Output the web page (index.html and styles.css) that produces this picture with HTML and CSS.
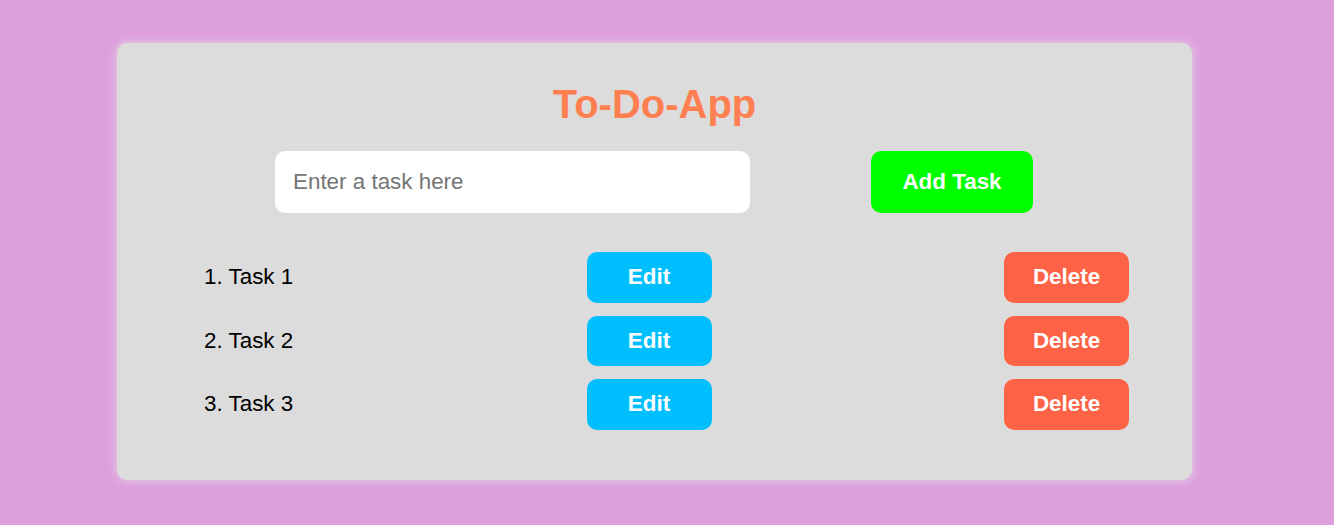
FILE: index.html
```html
<!DOCTYPE html>
<html lang="en">
<head>
<meta charset="utf-8">
<title>To-Do-App</title>
<link rel="stylesheet" href="styles.css">
</head>
<body>
<main class="card">
  <h1 class="title">To-Do-App</h1>
  <div class="entry">
    <input class="task-input" type="text" placeholder="Enter a task here">
    <button class="btn btn-add">Add Task</button>
  </div>
  <ul class="tasks">
    <li class="task"><span class="task-text">1. Task 1</span><button class="btn btn-edit">Edit</button><button class="btn btn-delete">Delete</button></li>
    <li class="task"><span class="task-text">2. Task 2</span><button class="btn btn-edit">Edit</button><button class="btn btn-delete">Delete</button></li>
    <li class="task"><span class="task-text">3. Task 3</span><button class="btn btn-edit">Edit</button><button class="btn btn-delete">Delete</button></li>
  </ul>
</main>
</body>
</html>
```

FILE: styles.css
```css
* { box-sizing: border-box; }

html, body {
  margin: 0;
  padding: 0;
}

body {
  background: #dda0dd;
  font-family: "Liberation Sans", Arial, sans-serif;
  padding: 43px 0 0 117px;
  height: 525px;
  overflow: hidden;
}

.card {
  width: 1075px;
  height: 437px;
  background: #dcdcdc;
  border-radius: 10px;
  box-shadow: 0 0 10px rgba(230, 220, 230, 0.9);
  padding-top: 38px;
}

.title {
  margin: 0;
  text-align: center;
  color: #ff7f50;
  font-size: 40px;
  font-weight: bold;
  line-height: 46px;
}

.entry {
  display: flex;
  gap: 121px;
  margin-top: 24px;
  padding-left: 158px;
}

.task-input {
  width: 475px;
  height: 62px;
  border: none;
  border-radius: 10px;
  background: #fff;
  padding: 0 18px;
  font-family: "Liberation Sans", Arial, sans-serif;
  font-size: 22.4px;
  outline: none;
}

.task-input::placeholder { color: #757575; }

.btn {
  border: none;
  border-radius: 10px;
  color: #fff;
  font-family: "Liberation Sans", Arial, sans-serif;
  font-weight: bold;
  font-size: 22.4px;
  cursor: pointer;
}

.btn-add {
  width: 162px;
  height: 62px;
  background: #00ff00;
}

.tasks {
  list-style: none;
  margin: 39px 0 0 0;
  padding: 0 63px 0 87px;
  display: flex;
  flex-direction: column;
  gap: 13px;
}

.task {
  display: flex;
  justify-content: space-between;
  align-items: center;
  height: 50.5px;
}

.task-text {
  font-size: 22.4px;
  color: #000;
  width: 90px;
  white-space: nowrap;
}

.btn-edit, .btn-delete {
  width: 125px;
  height: 50.5px;
}

.btn-edit { background: #00bfff; }
.btn-delete { background: #ff6347; }
```
